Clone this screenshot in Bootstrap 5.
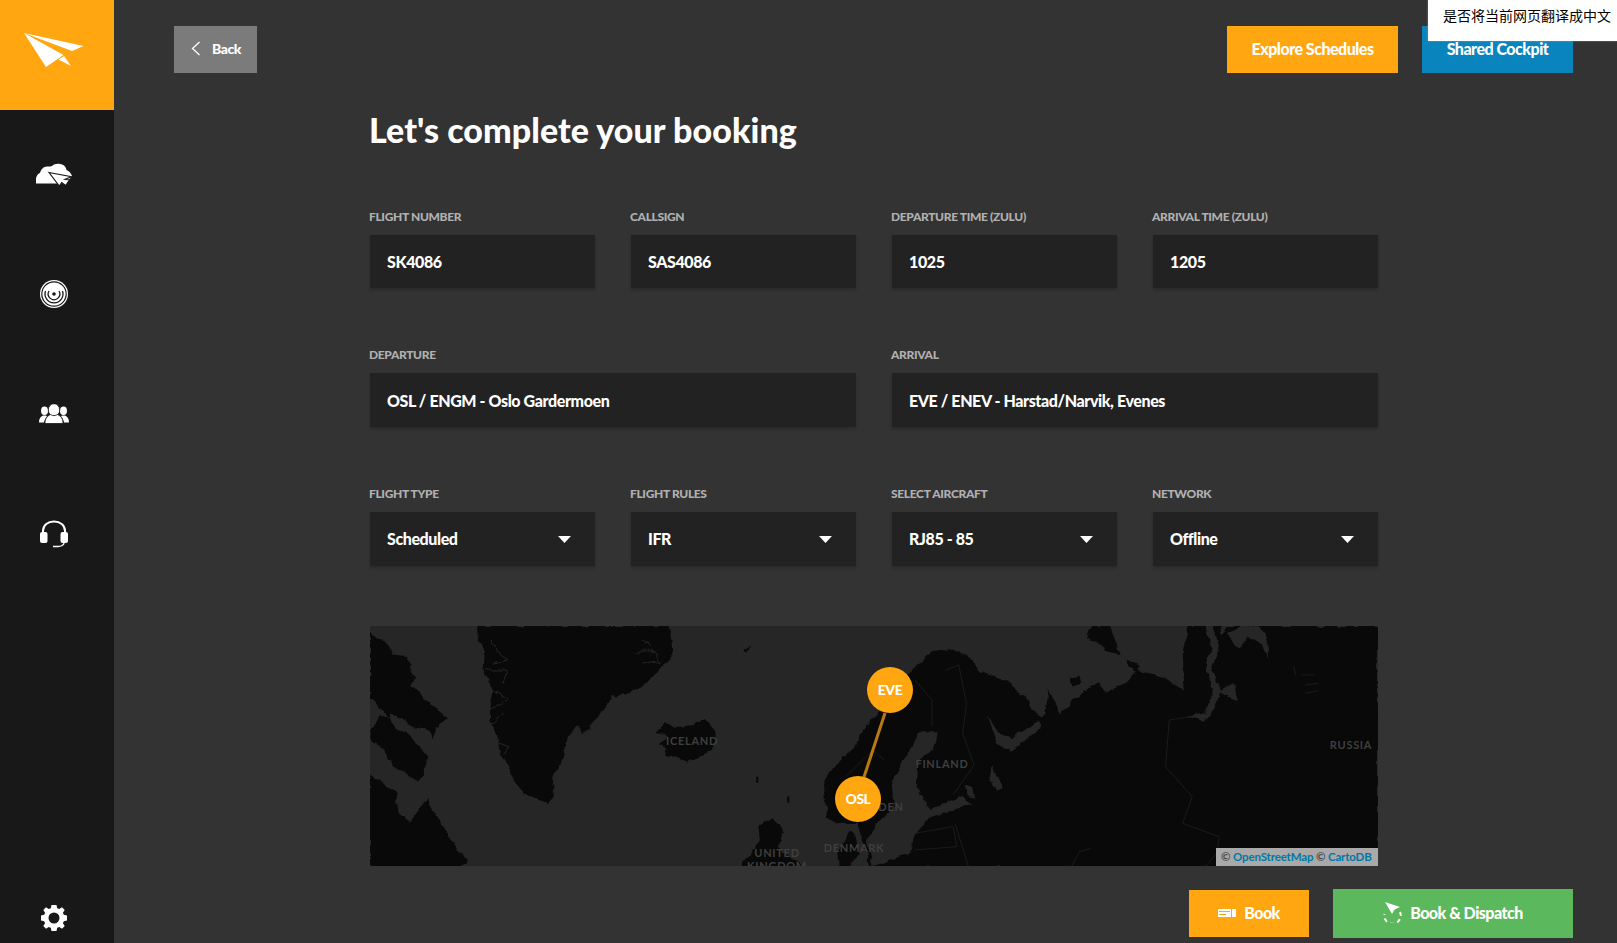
<!DOCTYPE html>
<html lang="en">
<head>
    <meta charset="UTF-8">
    <meta name="viewport" content="width=device-width, initial-scale=1.0">
    <title>Complete booking</title>
    <link href="https://cdn.jsdelivr.net/npm/bootstrap@5.3.0/dist/css/bootstrap.min.css" rel="stylesheet">
    <style>
        html, body { height: 100%; overflow: hidden; }
        body {
            font-family: Lato, "Noto Sans", sans-serif;
            background: #333;
            color: #fff;
        }

        /* Sidebar */
        .side-rail { width: 114px; height: 943px; background: #181818; flex-shrink: 0; }
        .side-logo { height: 110px; background: #ffa611; margin-bottom: 4px; }
        .side-link { height: 120px; padding-right: 6px; }
        .side-gear { height: 39px; padding-right: 6px; }

        /* Main area */
        .main-area { flex: 1; padding: 26px 44px 0 60px; min-width: 0; }
        .act-btn {
            height: 47px;
            padding: 0 0 2px;
            border: 0;
            border-radius: 0;
            color: #fff;
            font-weight: 900;
            font-size: 16px;
            letter-spacing: -.5px;
            line-height: 45px;
        }
        .act-btn:hover, .act-btn:active { color: #fff; }
        .btn-grey { background: #7b7b7b; font-size: 14px; width: 83px; }
        .btn-amber { background: #ffa611; }
        .btn-amber:hover { background: #ffa611; }
        .btn-sky { background: #0984bd; width: 151px; }
        .btn-sky:hover { background: #0984bd; }
        .btn-leaf { background: #5cb85c; width: 240px; height: 49px; }
        .btn-leaf:hover { background: #5cb85c; }
        .btn-explore { width: 171px; }
        .btn-book { width: 120px; }

        .booking-wrap { width: 1008px; margin-left: 196px; }
        .page-title { font-size: 34px; line-height: 36px; font-weight: 900; letter-spacing: .05px; margin: 39px 0 60px -1px; }
        .form-row { --bs-gutter-x: 36px; --bs-gutter-y: 0; }
        .form-row + .form-row { margin-top: 58px; }
        .fld-label {
            display: block;
            font-size: 12px;
            line-height: 18px;
            font-weight: 900;
            letter-spacing: -.35px;
            color: #b0b0b0;
            text-transform: uppercase;
            margin: 0 0 9px -1px;
        }
        .fld-input, .fld-input:focus {
            height: 53px;
            padding: 0 17px;
            background-color: #222;
            border: 0;
            border-radius: 0;
            color: #fff;
            font-size: 16px;
            font-weight: 900;
            letter-spacing: -.4px;
            box-shadow: 0 2px 3px rgba(0, 0, 0, .2);
        }
        .fld-tall, .fld-tall:focus { height: 54px; }
        .form-select.fld-input {
            background-image: url("data:image/svg+xml,%3Csvg xmlns='http://www.w3.org/2000/svg' width='13' height='7'%3E%3Cpath d='M0 0h13L6.500 7z' fill='%23fff'/%3E%3C/svg%3E");
            background-size: 13px 7px;
            background-position: right 24px top 24px;
        }

        /* Map */
        .map-box { height: 240px; margin-top: 60px; background: #262626; overflow: hidden; }
        .map-box svg { display: block; }
        .map-name { font-size: 11px; font-weight: 700; letter-spacing: .7px; fill: #3f3f3f; text-anchor: middle; }
        .map-pin {
            position: absolute;
            width: 46px;
            height: 46px;
            padding-bottom: 1px;
            background: #ffa611;
            font-size: 14px;
            font-weight: 900;
            letter-spacing: -.5px;
        }
        .pin-eve { left: 497px; top: 41px; }
        .pin-osl { left: 465px; top: 150px; }
        .map-credit {
            position: absolute;
            right: 0;
            bottom: 0;
            height: 18px;
            width: 162px;
            padding-left: 5px;
            background: #a9a9a9;
            color: #4a4a4a;
            font-size: 11.500px;
            font-weight: 700;
            letter-spacing: -.15px;
            line-height: 18px;
            white-space: nowrap;
        }
        .map-credit a { color: #0078a8; text-decoration: none; }

        .foot-actions { margin-top: 23px; margin-right: -195px; gap: 24px; }

        /* Browser translate prompt */
        .translate-tip {
            position: absolute;
            top: 0;
            right: 0;
            width: 189px;
            height: 41px;
            padding: 5px 0 0 15px;
            background: #fff;
            color: #000;
            font-family: "Noto Sans CJK SC", sans-serif;
            font-size: 14px;
            line-height: 20px;
            white-space: nowrap;
            box-shadow: 0 0 2px rgba(160, 180, 200, .6);
        }
    </style>
</head>
<body>
<div class="d-flex">
    <nav class="side-rail d-flex flex-column">
        <div class="side-logo">
            <svg width="114" height="110" viewBox="0 0 114 110" fill="#fff">
                <path d="M24 33 83.500 46 72 51 28 34.500z"/>
                <path d="M24 33 63.500 55 46 67z"/>
                <path d="M58.500 59.500 64 56 71 66z"/>
            </svg>
        </div>
        <a class="side-link d-flex align-items-center justify-content-center" href="#">
            <svg width="36" height="23" viewBox="0 0 36 23">
                <path fill="#fff" d="M0 20.500V17C0 13 2 10.500 4 10 5 6 8 3 12 3.500 14 3.500 15 3.500 16 3 18 1 21 .5 24 1 28 1.500 30 4 30.500 7 33 8 35 10 36 13L30 20.500z"/>
                <path fill="#fff" stroke="#181818" stroke-width="1.200" d="M13 9.500 35.500 13.700 29 16.300 33.500 17 29.700 22.500 25.700 19.700 23.300 23z"/>
            </svg>
        </a>
        <a class="side-link d-flex align-items-center justify-content-center" href="#">
            <svg width="30" height="30" viewBox="-15 -15 30 30" fill="none" stroke="#181818">
                <circle r="14" fill="#fff" stroke="none"/>
                <circle r="12.200" stroke-width="1.200"/>
                <path stroke-width="1.300" d="M-8.500-3A9 9 0 1 0 8.500-3"/>
                <path stroke-width="1.300" d="M-5-3A5.800 5.800 0 1 0 5-3"/>
                <circle cy="0" r="1.800" fill="#181818" stroke="none"/>
            </svg>
        </a>
        <a class="side-link d-flex align-items-center justify-content-center" href="#">
            <svg width="30" height="20" viewBox="0 0 30 20" fill="#fff">
                <ellipse cx="5.500" cy="6.700" rx="3.500" ry="4.300"/>
                <ellipse cx="24.500" cy="6.700" rx="3.500" ry="4.300"/>
                <path d="M0 18.500C0 14.500 1.500 12.500 4 11.500H7L8 12.500C6.500 14 5.500 16 5 18.500z"/>
                <path d="M30 18.500C30 14.500 28.500 12.500 26 11.500H23L22 12.500C23.500 14 24.500 16 25 18.500z"/>
                <g stroke="#181818" stroke-width=".8">
                    <ellipse cx="15" cy="6" rx="5.700" ry="6.300"/>
                    <path d="M6 19.500C6 15 7.500 12.500 11.500 10.500 13.500 12 16.500 12 18.500 10.500 22.500 12.500 24 15 24 19.500z"/>
                </g>
            </svg>
        </a>
        <a class="side-link d-flex align-items-center justify-content-center" href="#">
            <svg width="30" height="28" viewBox="0 0 30 28" fill="none" stroke="#fff">
                <path stroke-width="2" d="M4 13V11C4 5 9 1.500 15 1.500S26 5 26 11V13"/>
                <rect x="1" y="12" width="7.500" height="11" rx="2" fill="#fff" stroke="none"/>
                <rect x="21.500" y="12" width="7.500" height="11" rx="2" fill="#fff" stroke="none"/>
                <path stroke-width="1.300" d="M25 23C25 25 22 26.500 19 26.500H14"/>
            </svg>
        </a>
        <a class="side-gear mt-auto d-flex align-items-start justify-content-center" href="#">
            <svg width="28" height="28" viewBox="-14 -14 28 28">
                <path fill="#fff" fill-rule="evenodd" d="M-2.500-13H2.500L3.200-9.800 5.300-8.900 8-10.700 10.700-8 8.900-5.300 9.800-3.200 13-2.500V2.500L9.800 3.200 8.900 5.300 10.700 8 8 10.700 5.300 8.900 3.200 9.800 2.500 13H-2.500L-3.200 9.800-5.300 8.900-8 10.700-10.700 8-8.900 5.300-9.800 3.200-13 2.500V-2.500L-9.800-3.200-8.900-5.300-10.700-8-8-10.700-5.300-8.900-3.200-9.800zM5.500 0A5.500 5.500 0 1 0-5.500 0 5.500 5.500 0 1 0 5.500 0z"/>
            </svg>
        </a>
    </nav>

    <main class="main-area">
        <div class="d-flex justify-content-between">
            <a href="#" class="btn act-btn btn-grey d-flex align-items-center justify-content-center gap-2">
                <svg width="14" height="15" viewBox="0 0 14 15" fill="none" stroke="#fff" stroke-width="1.300"><path d="M9.500 1 2.500 7.500 9.500 14"/></svg>
                <span>Back</span>
            </a>
            <div class="d-flex gap-4">
                <a href="#" class="btn act-btn btn-amber btn-explore">Explore Schedules</a>
                <a href="#" class="btn act-btn btn-sky">Shared Cockpit</a>
            </div>
        </div>

        <div class="booking-wrap">
            <h1 class="page-title">Let's complete your booking</h1>

            <div class="row form-row">
                <div class="col-3"><label class="fld-label">Flight number</label><input class="form-control fld-input" value="SK4086"></div>
                <div class="col-3"><label class="fld-label">Callsign</label><input class="form-control fld-input" value="SAS4086"></div>
                <div class="col-3"><label class="fld-label">Departure time (zulu)</label><input class="form-control fld-input" value="1025"></div>
                <div class="col-3"><label class="fld-label">Arrival time (zulu)</label><input class="form-control fld-input" value="1205"></div>
            </div>
            <div class="row form-row">
                <div class="col-6"><label class="fld-label">Departure</label><input class="form-control fld-input fld-tall" value="OSL / ENGM - Oslo Gardermoen"></div>
                <div class="col-6"><label class="fld-label">Arrival</label><input class="form-control fld-input fld-tall" value="EVE / ENEV - Harstad/Narvik, Evenes"></div>
            </div>
            <div class="row form-row">
                <div class="col-3"><label class="fld-label">Flight type</label><select class="form-select fld-input fld-tall"><option>Scheduled</option></select></div>
                <div class="col-3"><label class="fld-label">Flight rules</label><select class="form-select fld-input fld-tall"><option>IFR</option></select></div>
                <div class="col-3"><label class="fld-label">Select aircraft</label><select class="form-select fld-input fld-tall"><option>RJ85 - 85</option></select></div>
                <div class="col-3"><label class="fld-label">Network</label><select class="form-select fld-input fld-tall"><option>Offline</option></select></div>
            </div>

            <div class="map-box position-relative">
                <svg width="1008" height="240" viewBox="0 0 1008 240">
                    <defs>
                        <filter id="coast" x="-5%" y="-5%" width="110%" height="110%" color-interpolation-filters="sRGB">
                            <feTurbulence type="fractalNoise" baseFrequency=".09" numOctaves="3" seed="4"/>
                            <feDisplacementMap in="SourceGraphic" scale="7" xChannelSelector="R" yChannelSelector="G"/>
                        </filter>
                    </defs>
                    <g filter="url(#coast)">
                    <!-- west half, traced at 3x -->
                    <g transform="translate(-10 -6) scale(.3333)" fill="#090909">
                        <path d="M30 30 45 55 75 60 100 100 130 105 155 135 150 160 165 175 155 195 180 215 210 255 235 270 258 295 225 325 215 360 195 325 150 320 120 290 90 280 85 310 70 270 45 240 30 235z"/>
                        <path d="M35 320 60 285 105 320 140 340 180 380 205 410 195 440 175 482 140 460 100 440 75 390 40 370 30 350z"/>
                        <path d="M30 465 60 480 110 520 115 580 150 605 185 560 203 535 235 600 260 640 295 690 325 720 300 745H30z"/>
                        <path d="M355 18H925L935 60 937 115 910 130 890 165 840 205 775 230 755 225 745 250 720 280 700 310 665 340 655 310 630 345 610 370 615 390 595 440 580 470 575 530 565 552 545 540 490 520 465 490 445 440 420 400 410 340 390 300 390 250 400 210 370 150 375 100 355 50z"/>
                        <path d="M890 340 915 305 940 320 965 320 1000 315 1030 300 1055 320 1072 360 1050 395 985 425 920 405 915 375 900 370 925 345z"/>
                        <path d="M1195 620 1235 595 1275 630 1250 680 1300 720 1338 745H1135L1170 700 1200 660z"/>
                        <path d="M1150 92 1170 80 1162 96z"/>
                        <path d="M1185 470h10v20h-8zM1280 525h8v20h-6z"/>
                        <g fill="none" stroke="#262626" stroke-width="3">
                            <path d="M845 60C880 70 870 100 900 125L840 135M830 100C850 95 850 80 870 90"/>
                            <path d="M390 60 420 100 440 120 400 130M375 150 440 150 430 190M400 210 440 240 395 270M395 310 430 280M415 370 450 380 430 400"/>
                        </g>
                    </g>
                    <!-- east half, traced from a crop squeezed on x -->
                    <g transform="translate(430 -6) scale(.3827 .3333)">
                        <path fill="#090909" d="M60 490 95 430 140 385 165 330 210 270 250 190 310 130 350 95 400 85 445 115 470 155 540 185 590 230 605 270 640 290 650 205 660 240 680 280 730 225 780 190 800 220 850 190 880 150 950 170 1005 215 1000 100 1015 18H1510V745H150L180 735 170 680 150 612 100 612 70 590z"/>
                        <path fill="#090909" d="M100 700 130 630 145 650 155 700 130 745H105z"/>
                        <path fill="#090909" d="M750 30 770 18H810L835 100 800 90 780 70 755 55z"/>
                        <path fill="#090909" d="M855 120 885 140 880 155 860 145zM705 170 730 165 735 190 712 200z"/>
                        <g fill="#262626">
                            <path d="M490 285 520 340 555 355 600 320 625 300 630 320 580 365 550 400 515 370 505 335z"/>
                            <path d="M240 490 270 420 310 340 360 340 350 390 310 420 305 500 340 570 420 530 450 555 340 590 300 640 290 700 190 738 175 660 210 600 245 560z"/>
                            <path d="M1060 18H1080L1095 80 1075 150 1095 210 1130 190 1145 240 1095 215 1080 270 1055 305 1010 290 1060 280 1080 210 1060 150 1075 85z"/>
                            <path d="M1120 40 1150 20 1200 18 1225 60 1225 120 1210 70 1170 50 1150 85 1130 70zM1100 18H1120L1105 45z"/>
                            <path d="M432 495 450 505 455 530 435 525zM500 440 525 500 515 520 495 480z"/>
                        </g>
                    </g>
                    </g>
                    <g transform="translate(430 -6) scale(.3827 .3333)" fill="none" stroke="#222" stroke-width="2">
                        <path d="M1020 290 965 300 955 440 1025 530 1000 610 1095 650 1090 700 1060 738"/>
                        <path d="M300 180 345 240 345 320M380 150 415 135 435 250 425 340 455 435 400 525"/>
                        <path d="M300 640 400 620 410 680 300 690M405 610 440 740M710 738 730 695 760 685M120 470 190 390 220 420"/>
                        <path d="M1290 140 1295 165M1310 165 1345 165M1320 195 1355 190M1320 220 1355 212"/>
                    </g>
                    <path d="M515 87 494 151" stroke="#b87a10" stroke-width="3"/>
                    <text class="map-name" x="322" y="118.500">ICELAND</text>
                    <text class="map-name" x="407" y="231">UNITED</text>
                    <text class="map-name" x="407" y="244">KINGDOM</text>
                    <text class="map-name" x="484" y="226">DENMARK</text>
                    <text class="map-name" x="572" y="142">FINLAND</text>
                    <text class="map-name" x="508" y="185">SWEDEN</text>
                    <text class="map-name" x="981" y="123">RUSSIA</text>
                </svg>
                <div class="map-pin pin-eve rounded-circle d-flex align-items-center justify-content-center">EVE</div>
                <div class="map-pin pin-osl rounded-circle d-flex align-items-center justify-content-center">OSL</div>
                <div class="map-credit">© <a href="#">OpenStreetMap</a> © <a href="#">CartoDB</a></div>
            </div>

            <div class="foot-actions d-flex justify-content-end align-items-center">
                <a href="#" class="btn act-btn btn-amber btn-book d-flex align-items-center justify-content-center gap-2">
                    <svg width="18" height="8" viewBox="0 0 18 8"><path fill="#fff" d="M0 0H13V8H0zM14 0H18V8H14z"/><path stroke="#ffa611" d="M1 2.500H12M1 5.500H8"/></svg>
                    <span>Book</span>
                </a>
                <a href="#" class="btn act-btn btn-leaf d-flex align-items-center justify-content-center gap-2">
                    <svg width="19" height="21" viewBox="0 0 19 21">
                        <path fill="#fff" d="M2 0 17 5 11.500 7.500 9 12z"/>
                        <path fill="none" stroke="#fff" stroke-width="2" stroke-dasharray="4 3.500" d="M17 10A8 8 0 0 1 2 17 8 8 0 0 1 1.500 12"/>
                    </svg>
                    <span>Book &amp; Dispatch</span>
                </a>
            </div>
        </div>
    </main>
</div>
<div class="translate-tip">是否将当前网页翻译成中文</div>
<script src="https://cdn.jsdelivr.net/npm/bootstrap@5.3.0/dist/js/bootstrap.bundle.min.js"></script>
</body>
</html>
